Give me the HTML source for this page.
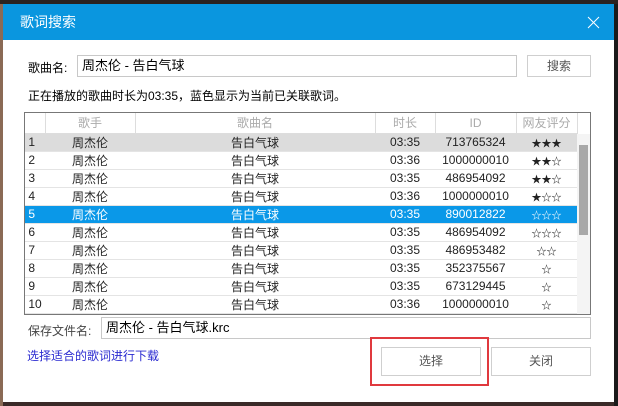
<!DOCTYPE html>
<html><head><meta charset="utf-8"><style>
*{margin:0;padding:0;box-sizing:border-box}
body{width:618px;height:406px;overflow:hidden;background:#3a2a28;font-family:"Liberation Sans","Noto Sans CJK SC",sans-serif;font-size:12px;color:#000;position:relative}
.a{position:absolute}
.dlg{left:3px;top:4px;width:611px;height:398px;background:#fff}
.title{left:3px;top:4px;width:611px;height:36px;background:#0a96df;color:#fff;font-size:14px;line-height:36px;padding-left:17px}
.inp{border:1px solid #c8c8c8;background:#fff;line-height:19px;padding-left:4px;font-size:13px}
.btn{border:1px solid #cfcfcf;background:#fff;color:#555;text-align:center;font-size:12px}
table{border-collapse:collapse;font-size:12px}
td{height:18px;border-bottom:1px solid #e4e4e4;padding:0;white-space:nowrap;color:#222}
.h td{color:#aaa;text-align:center;height:20px;border-right:1px solid #ddd;border-bottom:1px solid #ddd}
.c{text-align:center}
.s{text-align:center;font-size:10px}
.sel td{color:#fff}
</style></head><body>
<div class="a" style="left:0;top:0;width:3px;height:406px;background:#8a6a55"></div>
<div class="a" style="left:614px;top:0;width:4px;height:406px;background:#1a1a1a"></div>
<div class="a" style="left:0;top:0;width:618px;height:4px;background:#2a2220"></div>
<div class="a dlg"></div>
<div class="a title">歌词搜索</div>
<svg class="a" style="left:587px;top:16px" width="13" height="13"><path d="M1 1L12 12M12 1L1 12" stroke="#fff" stroke-width="1"/></svg>
<div class="a" style="left:28px;top:59px">歌曲名:</div>
<div class="a inp" style="left:77px;top:55px;width:440px;height:22px">周杰伦 - 告白气球</div>
<div class="a btn" style="left:527px;top:55px;width:64px;height:22px;line-height:20px">搜索</div>
<div class="a" style="left:28px;top:87px">正在播放的歌曲时长为03:35，蓝色显示为当前已关联歌词。</div>
<div class="a" style="left:24px;top:112px;width:567px;height:203px;border:1px solid #777;overflow:hidden">
<table style="width:552px;table-layout:fixed">
<col style="width:20px"><col style="width:90px"><col style="width:240px"><col style="width:60px"><col style="width:81px"><col style="width:61px">
<tr class="h"><td></td><td>歌手</td><td>歌曲名</td><td>时长</td><td>ID</td><td>网友评分</td></tr>
<tr style="background:#dcdcdc"><td>&nbsp;1</td><td class="c">周杰伦</td><td class="c">告白气球</td><td class="c">03:35</td><td class="c">713765324</td><td class="s">★★★</td></tr>
<tr><td>&nbsp;2</td><td class="c">周杰伦</td><td class="c">告白气球</td><td class="c">03:36</td><td class="c">1000000010</td><td class="s">★★☆</td></tr>
<tr><td>&nbsp;3</td><td class="c">周杰伦</td><td class="c">告白气球</td><td class="c">03:35</td><td class="c">486954092</td><td class="s">★★☆</td></tr>
<tr><td>&nbsp;4</td><td class="c">周杰伦</td><td class="c">告白气球</td><td class="c">03:36</td><td class="c">1000000010</td><td class="s">★☆☆</td></tr>
<tr class="sel" style="background:#0a98e8"><td>&nbsp;5</td><td class="c">周杰伦</td><td class="c">告白气球</td><td class="c">03:35</td><td class="c">890012822</td><td class="s">☆☆☆</td></tr>
<tr><td>&nbsp;6</td><td class="c">周杰伦</td><td class="c">告白气球</td><td class="c">03:35</td><td class="c">486954092</td><td class="s">☆☆☆</td></tr>
<tr><td>&nbsp;7</td><td class="c">周杰伦</td><td class="c">告白气球</td><td class="c">03:35</td><td class="c">486953482</td><td class="s">☆☆</td></tr>
<tr><td>&nbsp;8</td><td class="c">周杰伦</td><td class="c">告白气球</td><td class="c">03:35</td><td class="c">352375567</td><td class="s">☆</td></tr>
<tr><td>&nbsp;9</td><td class="c">周杰伦</td><td class="c">告白气球</td><td class="c">03:35</td><td class="c">673129445</td><td class="s">☆</td></tr>
<tr><td>&nbsp;10</td><td class="c">周杰伦</td><td class="c">告白气球</td><td class="c">03:36</td><td class="c">1000000010</td><td class="s">☆</td></tr>
</table>
<div class="a" style="left:552px;top:21px;width:13px;height:181px;background:#f4f4f4"></div>
<div class="a" style="left:554px;top:32px;width:9px;height:90px;background:#a8a8a8"></div>
</div>
<div class="a" style="left:28px;top:322px;color:#444">保存文件名:</div>
<div class="a inp" style="left:101px;top:317px;width:490px;height:22px">周杰伦 - 告白气球.krc</div>
<div class="a" style="left:27px;top:347px;color:#2a2ad0">选择适合的歌词进行下载</div>
<div class="a" style="left:370px;top:337px;width:119px;height:49px;border:2px solid #e0393e"></div>
<div class="a btn" style="left:381px;top:347px;width:100px;height:29px;line-height:27px">选择</div>
<div class="a btn" style="left:491px;top:347px;width:100px;height:29px;line-height:27px">关闭</div>
</body></html>
